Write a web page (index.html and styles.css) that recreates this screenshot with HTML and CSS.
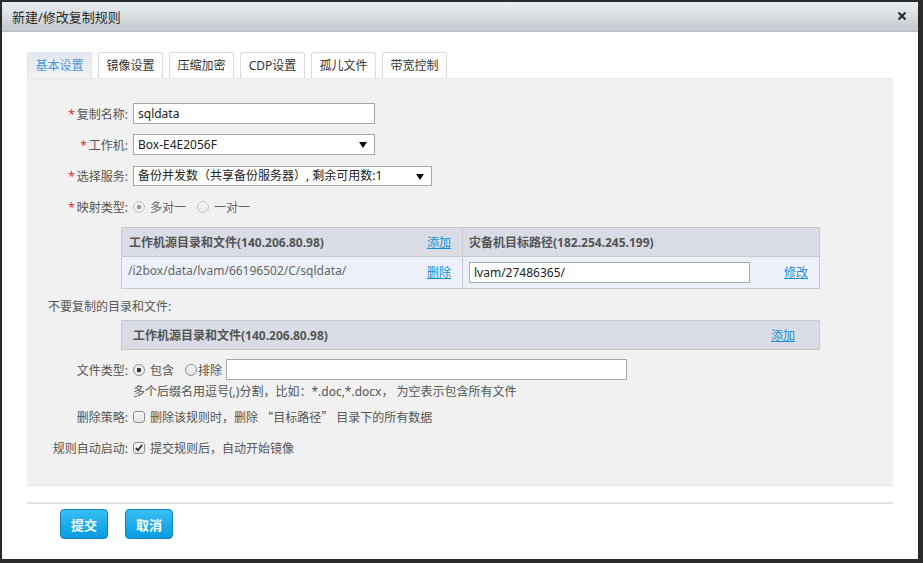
FILE: index.html
```html
<!DOCTYPE html>
<html lang="zh-CN">
<head>
<meta charset="UTF-8" />
<title>新建/修改复制规则</title>
<link rel="stylesheet" href="styles.css">
</head>
<body>
  <div class="dialog">
    <div class="dialog-title">
      <span>新建/修改复制规则</span>
      <svg class="close" width="10" height="10" viewBox="0 0 10 10"><path d="M1.5 1.5L8.5 8.5M8.5 1.5L1.5 8.5" stroke="#2b3036" stroke-width="2.2"/></svg>
    </div>
    <div class="dialog-body">
      <ul class="tabs">
        <li class="tab active">基本设置</li>
        <li class="tab">镜像设置</li>
        <li class="tab">压缩加密</li>
        <li class="tab">CDP设置</li>
        <li class="tab">孤儿文件</li>
        <li class="tab">带宽控制</li>
      </ul>
      <div class="panel">
        <div class="row">
          <label class="label"><em>*</em>复制名称:</label>
          <input type="text" class="text-input w242" value="sqldata" />
        </div>
        <div class="row">
          <label class="label"><em>*</em>工作机:</label>
          <span class="select w242"><select><option>Box-E4E2056F</option></select></span>
        </div>
        <div class="row">
          <label class="label"><em>*</em>选择服务:</label>
          <span class="select w299"><select><option>备份并发数（共享备份服务器）, 剩余可用数:1</option></select></span>
        </div>
        <div class="row">
          <label class="label"><em>*</em>映射类型:</label>
          <input type="radio" name="map" checked disabled /><span class="opt muted">多对一</span>
          <input type="radio" name="map" disabled class="gap-l" /><span class="opt muted">一对一</span>
        </div>

        <table class="grid map-table">
          <tr class="head">
            <td class="c1"><b>工作机源目录和文件(140.206.80.98)</b><a href="#">添加</a></td>
            <td class="c2"><b>灾备机目标路径(182.254.245.199)</b></td>
          </tr>
          <tr class="body">
            <td class="c1"><span class="path">/i2box/data/lvam/66196502/C/sqldata/</span><a href="#">删除</a></td>
            <td class="c2"><input type="text" class="text-input target" value="lvam/27486365/" /><a href="#">修改</a></td>
          </tr>
        </table>

        <div class="section-title">不要复制的目录和文件:</div>
        <table class="grid exclude-table">
          <tr class="head">
            <td><b>工作机源目录和文件(140.206.80.98)</b><a href="#">添加</a></td>
          </tr>
        </table>

        <div class="row file-row">
          <label class="label">文件类型:</label>
          <input type="radio" name="ftype" checked /><span class="opt">包含</span>
          <input type="radio" name="ftype" class="gap-s" /><span class="opt tight">排除</span>
          <input type="text" class="text-input w401" />
        </div>
        <div class="hint">多个后缀名用逗号(,)分割，比如：*.doc,*.docx， 为空表示包含所有文件</div>
        <div class="row check-row">
          <label class="label">删除策略:</label>
          <input type="checkbox" /><span class="opt">删除该规则时，删除 <span class="cjk">“</span>目标路径<span class="cjk">”</span> 目录下的所有数据</span>
        </div>
        <div class="row check-row auto-row">
          <label class="label">规则自动启动:</label>
          <input type="checkbox" checked /><span class="opt">提交规则后，自动开始镜像</span>
        </div>
      </div>
      <div class="actions">
        <button class="btn">提交</button>
        <button class="btn">取消</button>
      </div>
    </div>
  </div>
</body>
</html>
```

FILE: styles.css
```css
body {
  margin: 0;
  background-color: #2b2b2b;
  font-family: 'Noto Sans', 'Noto Sans CJK SC', sans-serif;
  font-size: 12px;
  color: #555;
}
.dialog {
  margin: 2px 0 0 2px;
  width: 916px;
  height: 557px;
  background-color: #fff;
}
.dialog-title {
  height: 30px;
  display: flex;
  align-items: center;
  justify-content: space-between;
  padding: 0 11px 0 10px;
  background: linear-gradient(#eaeff3, #c4cacf);
  border-bottom: 1px solid #b9bfc5;
  box-sizing: border-box;
  font-size: 13px;
  color: #2a2a2a;
}
.close {
  margin-top: -2px;
}
.dialog-body {
  padding: 20px 25px 0 25px;
}
.tabs {
  list-style: none;
  margin: 0;
  padding: 0;
  display: flex;
  gap: 6px;
}
.tab {
  width: 65px;
  height: 26px;
  box-sizing: border-box;
  border: 1px solid #d6dce2;
  border-bottom: none;
  border-radius: 3px 3px 0 0;
  text-align: center;
  line-height: 25px;
  color: #333;
  background-color: #fff;
}
.tab.active {
  background: linear-gradient(#e2e8f0, #f2f4f4);
  color: #4b95dc;
  border-color: #dfe5ea;
}
.panel {
  background-color: #f0f1f0;
  border-top: 1px solid #e2e8ee;
  border-bottom: 1px solid #e3e8ec;
  padding: 24px 0 27px 0;
}
.row {
  display: flex;
  align-items: center;
  height: 21px;
  margin-bottom: 10px;
}
.label {
  width: 101px;
  margin-right: 5px;
  text-align: right;
  color: #555;
  white-space: nowrap;
}
.label em {
  font-style: normal;
  color: #e0312e;
  margin-right: 2px;
}
.text-input {
  height: 21px;
  box-sizing: border-box;
  border: 1px solid #a9a9a9;
  background-color: #fff;
  padding: 0 4px;
  font-family: inherit;
  font-size: 12px;
  color: #222;
  outline: none;
}
.w242 { width: 242px; }
.w299 { width: 299px; }
.w401 { width: 401px; }
.select {
  position: relative;
  display: inline-block;
  height: 21px;
}
.select.w299 { height: 20px; }
.select select {
  appearance: none;
  -webkit-appearance: none;
  width: 100%;
  height: 100%;
  box-sizing: border-box;
  border: 1px solid #a9a9a9;
  border-radius: 0;
  background-color: #fff;
  padding: 0 4px;
  font-family: inherit;
  font-size: 12px;
  color: #222;
  outline: none;
}
.select::after {
  content: "";
  position: absolute;
  right: 8px;
  top: 8px;
  border-left: 4px solid transparent;
  border-right: 4px solid transparent;
  border-top: 6px solid #111;
  pointer-events: none;
}
input[type="radio"],
input[type="checkbox"] {
  appearance: none;
  -webkit-appearance: none;
  width: 12px;
  height: 12px;
  margin: 0 5px 0 0;
  box-sizing: border-box;
  border: 1px solid #8f8f8f;
  background: linear-gradient(#f6f6f6, #e2e2e2);
  flex: none;
}
input[type="radio"] {
  border-radius: 50%;
}
input[type="radio"]:checked {
  background: radial-gradient(circle, #333 0, #333 2px, #f4f4f4 2.6px, #e6e6e6 100%);
}
input[type="radio"]:disabled {
  border-color: #c6c6c6;
  background: linear-gradient(#f4f4f4, #e9e9e9);
}
input[type="radio"]:disabled:checked {
  background: radial-gradient(circle, #9a9a9a 0, #9a9a9a 2px, #f2f2f2 2.6px, #e9e9e9 100%);
}
input[type="checkbox"] {
  border-radius: 3px;
  margin-right: 5px;
}
input[type="checkbox"]:checked {
  background: url("data:image/svg+xml;utf8,<svg xmlns='http://www.w3.org/2000/svg' width='12' height='12' viewBox='0 0 12 12'><path d='M2.2 6.2L4.8 8.6L9.6 2.4' fill='none' stroke='%23222' stroke-width='2'/></svg>") center / 10px 10px no-repeat, linear-gradient(#f6f6f6, #e2e2e2);
}
.opt {
  color: #555;
  white-space: nowrap;
}
.opt.muted {
  color: #666;
}
.cjk {
  font-family: 'Noto Sans CJK SC', sans-serif;
}
.gap-l {
  margin-left: 11px !important;
}
.gap-s {
  margin-left: 11px !important;
  margin-right: 1px !important;
}
.opt.tight {
  margin-right: 4px;
}
.grid {
  border-collapse: collapse;
  margin-left: 94px;
  width: 699px;
}
.grid td {
  border: 1px solid #c6c9d0;
  padding: 0 11px 0 7px;
  white-space: nowrap;
}
.grid b {
  color: #555;
}
.grid a {
  float: right;
  color: #1a8fd0;
  text-decoration: underline;
}
.grid .head td {
  background-color: #d9dce4;
  height: 28px;
}
.grid .body td {
  background-color: #ecf1f9;
  height: 31px;
}
.map-table {
  margin-top: 10px;
}
.map-table .c1 {
  width: 322px;
}
.map-table .c2 {
  padding-left: 6px;
}
.path {
  color: #666;
}
.grid .body .c1 {
  padding-left: 6px;
}
.target {
  width: 281px;
  vertical-align: middle;
}
.grid .body a {
  line-height: 21px;
}
.section-title {
  margin: 8px 0 0 21px;
  line-height: 20px;
}
.exclude-table {
  margin-top: 3px;
}
.exclude-table td {
  padding-left: 11px !important;
  padding-right: 24px !important;
}
.file-row {
  margin-top: 9px;
  margin-bottom: 0;
}
.hint {
  margin: 3px 0 0 106px;
  line-height: 18px;
}
.check-row {
  margin-top: 5px;
  margin-bottom: 0;
}
.auto-row {
  margin-top: 10px;
}
.actions {
  margin-top: 16px;
  border-top: 2px solid #e2e2e2;
  padding: 5px 0 0 33px;
  display: flex;
  gap: 17px;
}
.btn {
  width: 48px;
  height: 30px;
  border: 1px solid #1482c2;
  border-radius: 4px;
  background: linear-gradient(#38bff3, #079ce0);
  color: #fff;
  font-family: inherit;
  font-size: 13px;
  font-weight: bold;
  padding: 0;
}
```
